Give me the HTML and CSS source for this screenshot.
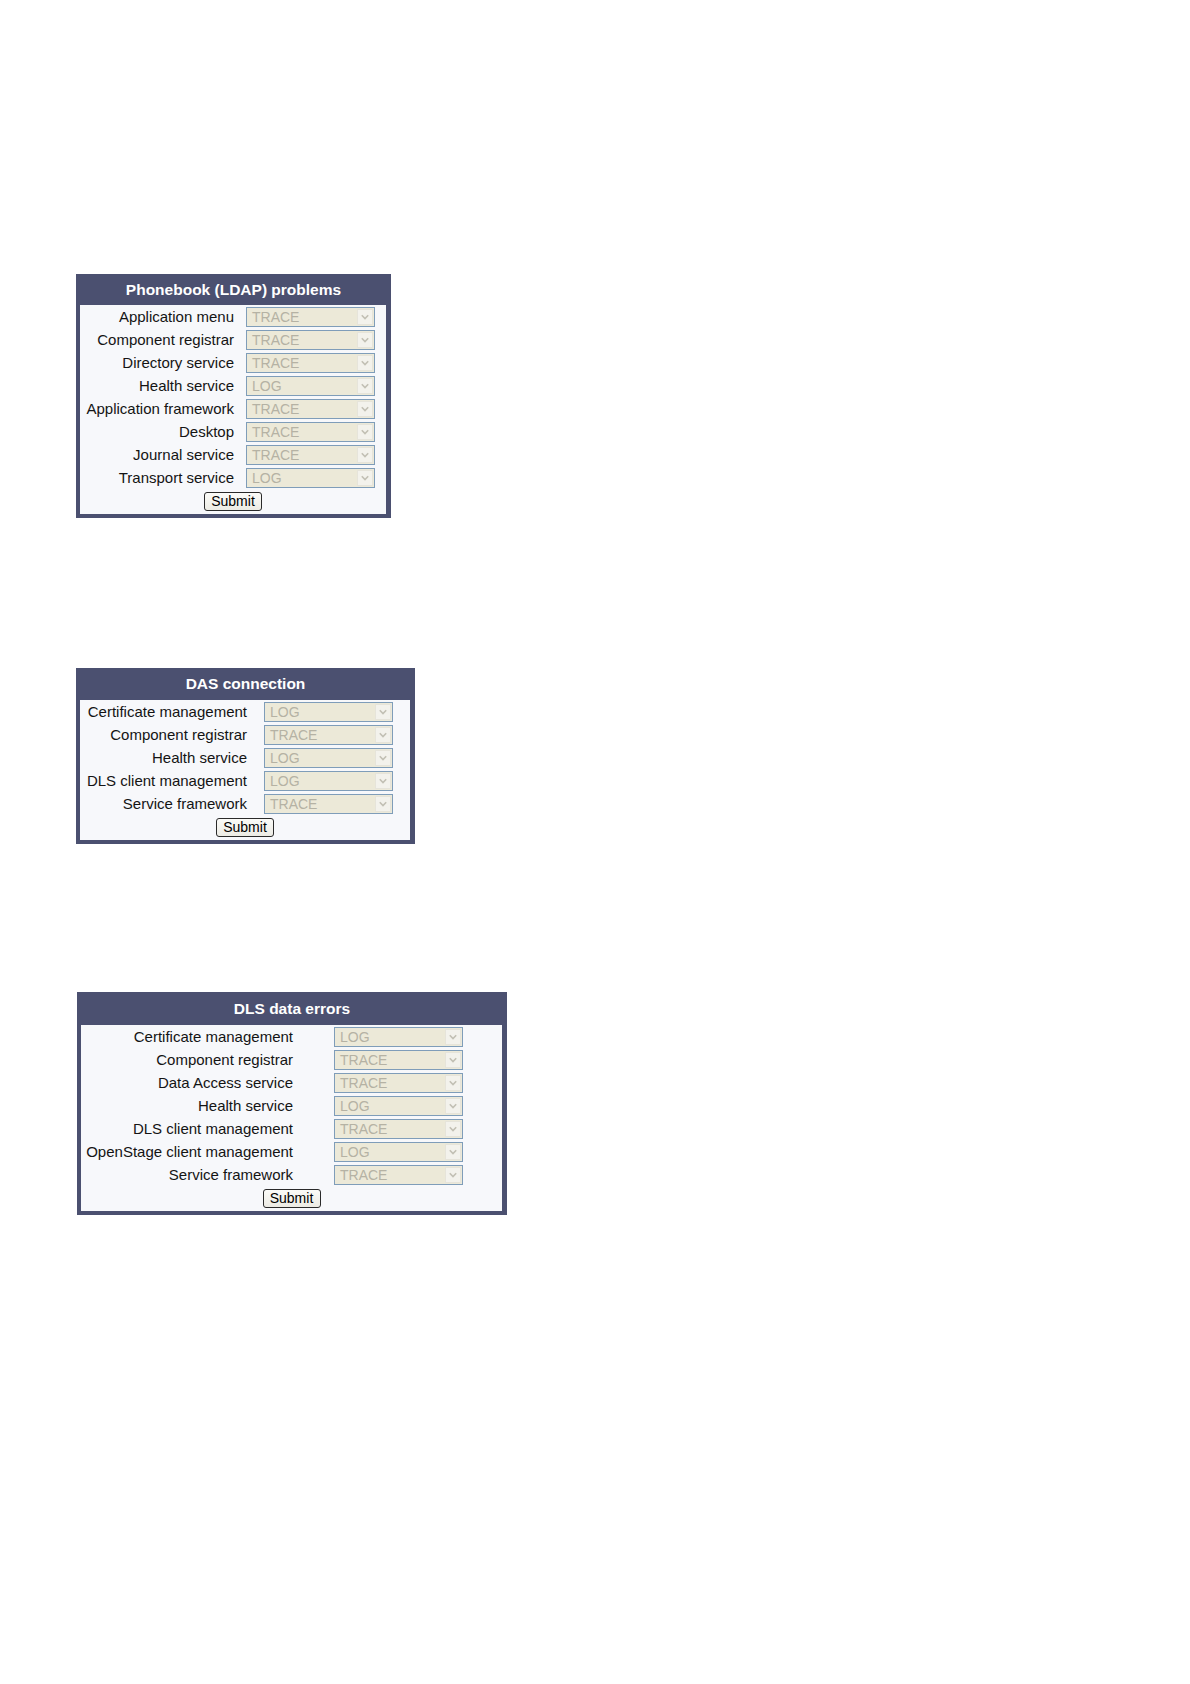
FILE: index.html
```html
<!DOCTYPE html>
<html>
<head>
<meta charset="utf-8">
<title>Log levels</title>
<link rel="stylesheet" href="styles.css">
</head>
<body>
<div class="page">

  <form class="panel panel-a">
    <div class="head">Phonebook (LDAP) problems</div>
    <div class="rows">
      <span class="lbl">Application menu</span><div class="sel"><span class="val">TRACE</span><span class="arr"><svg viewBox="0 0 10 10" width="10" height="10"><path d="M1.8 3.2 L5 6.6 L8.2 3.2" fill="none" stroke="#c2c0b4" stroke-width="1.6"/></svg></span></div>
      <span class="lbl">Component registrar</span><div class="sel"><span class="val">TRACE</span><span class="arr"><svg viewBox="0 0 10 10" width="10" height="10"><path d="M1.8 3.2 L5 6.6 L8.2 3.2" fill="none" stroke="#c2c0b4" stroke-width="1.6"/></svg></span></div>
      <span class="lbl">Directory service</span><div class="sel"><span class="val">TRACE</span><span class="arr"><svg viewBox="0 0 10 10" width="10" height="10"><path d="M1.8 3.2 L5 6.6 L8.2 3.2" fill="none" stroke="#c2c0b4" stroke-width="1.6"/></svg></span></div>
      <span class="lbl">Health service</span><div class="sel"><span class="val">LOG</span><span class="arr"><svg viewBox="0 0 10 10" width="10" height="10"><path d="M1.8 3.2 L5 6.6 L8.2 3.2" fill="none" stroke="#c2c0b4" stroke-width="1.6"/></svg></span></div>
      <span class="lbl">Application framework</span><div class="sel"><span class="val">TRACE</span><span class="arr"><svg viewBox="0 0 10 10" width="10" height="10"><path d="M1.8 3.2 L5 6.6 L8.2 3.2" fill="none" stroke="#c2c0b4" stroke-width="1.6"/></svg></span></div>
      <span class="lbl">Desktop</span><div class="sel"><span class="val">TRACE</span><span class="arr"><svg viewBox="0 0 10 10" width="10" height="10"><path d="M1.8 3.2 L5 6.6 L8.2 3.2" fill="none" stroke="#c2c0b4" stroke-width="1.6"/></svg></span></div>
      <span class="lbl">Journal service</span><div class="sel"><span class="val">TRACE</span><span class="arr"><svg viewBox="0 0 10 10" width="10" height="10"><path d="M1.8 3.2 L5 6.6 L8.2 3.2" fill="none" stroke="#c2c0b4" stroke-width="1.6"/></svg></span></div>
      <span class="lbl">Transport service</span><div class="sel"><span class="val">LOG</span><span class="arr"><svg viewBox="0 0 10 10" width="10" height="10"><path d="M1.8 3.2 L5 6.6 L8.2 3.2" fill="none" stroke="#c2c0b4" stroke-width="1.6"/></svg></span></div>
    </div>
    <div class="actions"><button type="button" class="btn">Submit</button></div>
  </form>

  <form class="panel panel-b">
    <div class="head">DAS connection</div>
    <div class="rows">
      <span class="lbl">Certificate management</span><div class="sel"><span class="val">LOG</span><span class="arr"><svg viewBox="0 0 10 10" width="10" height="10"><path d="M1.8 3.2 L5 6.6 L8.2 3.2" fill="none" stroke="#c2c0b4" stroke-width="1.6"/></svg></span></div>
      <span class="lbl">Component registrar</span><div class="sel"><span class="val">TRACE</span><span class="arr"><svg viewBox="0 0 10 10" width="10" height="10"><path d="M1.8 3.2 L5 6.6 L8.2 3.2" fill="none" stroke="#c2c0b4" stroke-width="1.6"/></svg></span></div>
      <span class="lbl">Health service</span><div class="sel"><span class="val">LOG</span><span class="arr"><svg viewBox="0 0 10 10" width="10" height="10"><path d="M1.8 3.2 L5 6.6 L8.2 3.2" fill="none" stroke="#c2c0b4" stroke-width="1.6"/></svg></span></div>
      <span class="lbl">DLS client management</span><div class="sel"><span class="val">LOG</span><span class="arr"><svg viewBox="0 0 10 10" width="10" height="10"><path d="M1.8 3.2 L5 6.6 L8.2 3.2" fill="none" stroke="#c2c0b4" stroke-width="1.6"/></svg></span></div>
      <span class="lbl">Service framework</span><div class="sel"><span class="val">TRACE</span><span class="arr"><svg viewBox="0 0 10 10" width="10" height="10"><path d="M1.8 3.2 L5 6.6 L8.2 3.2" fill="none" stroke="#c2c0b4" stroke-width="1.6"/></svg></span></div>
    </div>
    <div class="actions"><button type="button" class="btn">Submit</button></div>
  </form>

  <form class="panel panel-c">
    <div class="head">DLS data errors</div>
    <div class="rows">
      <span class="lbl">Certificate management</span><div class="sel"><span class="val">LOG</span><span class="arr"><svg viewBox="0 0 10 10" width="10" height="10"><path d="M1.8 3.2 L5 6.6 L8.2 3.2" fill="none" stroke="#c2c0b4" stroke-width="1.6"/></svg></span></div>
      <span class="lbl">Component registrar</span><div class="sel"><span class="val">TRACE</span><span class="arr"><svg viewBox="0 0 10 10" width="10" height="10"><path d="M1.8 3.2 L5 6.6 L8.2 3.2" fill="none" stroke="#c2c0b4" stroke-width="1.6"/></svg></span></div>
      <span class="lbl">Data Access service</span><div class="sel"><span class="val">TRACE</span><span class="arr"><svg viewBox="0 0 10 10" width="10" height="10"><path d="M1.8 3.2 L5 6.6 L8.2 3.2" fill="none" stroke="#c2c0b4" stroke-width="1.6"/></svg></span></div>
      <span class="lbl">Health service</span><div class="sel"><span class="val">LOG</span><span class="arr"><svg viewBox="0 0 10 10" width="10" height="10"><path d="M1.8 3.2 L5 6.6 L8.2 3.2" fill="none" stroke="#c2c0b4" stroke-width="1.6"/></svg></span></div>
      <span class="lbl">DLS client management</span><div class="sel"><span class="val">TRACE</span><span class="arr"><svg viewBox="0 0 10 10" width="10" height="10"><path d="M1.8 3.2 L5 6.6 L8.2 3.2" fill="none" stroke="#c2c0b4" stroke-width="1.6"/></svg></span></div>
      <span class="lbl">OpenStage client management</span><div class="sel"><span class="val">LOG</span><span class="arr"><svg viewBox="0 0 10 10" width="10" height="10"><path d="M1.8 3.2 L5 6.6 L8.2 3.2" fill="none" stroke="#c2c0b4" stroke-width="1.6"/></svg></span></div>
      <span class="lbl">Service framework</span><div class="sel"><span class="val">TRACE</span><span class="arr"><svg viewBox="0 0 10 10" width="10" height="10"><path d="M1.8 3.2 L5 6.6 L8.2 3.2" fill="none" stroke="#c2c0b4" stroke-width="1.6"/></svg></span></div>
    </div>
    <div class="actions"><button type="button" class="btn">Submit</button></div>
  </form>

</div>
</body>
</html>
```
FILE: styles.css
```css
html, body {
  margin: 0;
  padding: 0;
  background: #ffffff;
}

.page {
  display: flex;
  flex-direction: column;
  align-items: flex-start;
  gap: 150px;
  padding: 274px 0 0 76px;
  font-family: "Liberation Sans", Arial, sans-serif;
}

.panel {
  margin: 0;
  box-sizing: border-box;
  background: #f7f8fb;
  border: 4px solid #4b5070;
  border-top: 0;
  border-right-width: 5px;
}

.panel-a { width: 315px; }
.panel-b { width: 339px; }
.panel-c { width: 430px; margin: -2px 0 0 1px; }

.head {
  background: #4b5070;
  color: #ffffff;
  font-weight: bold;
  font-size: 15.5px;
  height: 31px;
  line-height: 31px;
  text-align: center;
  margin: 0 -5px 0 -4px;
}

.panel-b .head { height: 32px; line-height: 32px; }
.panel-c .head { height: 33px; line-height: 33px; }

.rows {
  display: grid;
  row-gap: 3px;
  padding-top: 2px;
  align-items: center;
}

.panel-a .rows { grid-template-columns: 154px 129px; column-gap: 12px; }
.panel-b .rows { grid-template-columns: 167px 129px; column-gap: 17px; }
.panel-c .rows { grid-template-columns: 212px 129px; column-gap: 41px; }

.lbl {
  text-align: right;
  font-size: 15px;
  line-height: 20px;
  color: #141414;
  white-space: nowrap;
}

.sel {
  box-sizing: border-box;
  height: 20px;
  border: 1px solid #7f9db9;
  background: #ece9d8;
  display: flex;
  align-items: center;
  justify-content: space-between;
  padding: 1px 1px 1px 5px;
}

.val {
  font-size: 14px;
  color: #b5b2a4;
  line-height: 16px;
}

.arr {
  box-sizing: border-box;
  width: 16px;
  height: 16px;
  background: #f3f2ec;
  border: 1px solid #e6e4da;
  display: flex;
  align-items: center;
  justify-content: center;
}

.actions {
  display: flex;
  justify-content: center;
  padding: 4px 0 3px;
}

.btn {
  box-sizing: border-box;
  width: 58px;
  height: 19px;
  padding: 0;
  font-family: "Liberation Sans", Arial, sans-serif;
  font-size: 14px;
  line-height: 17px;
  color: #000;
  background: linear-gradient(#fbfbf8, #ecebe4);
  border: 1px solid #2a2a2a;
  border-radius: 3px;
}
```
